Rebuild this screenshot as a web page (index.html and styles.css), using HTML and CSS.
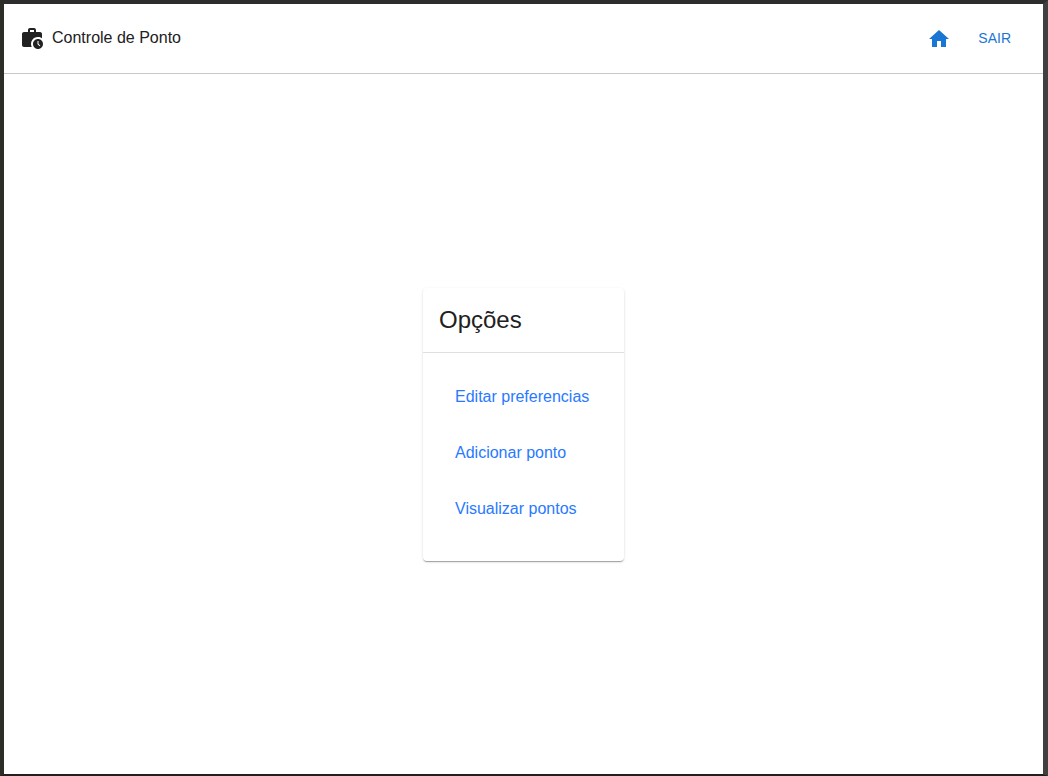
FILE: index.html
```html
<!DOCTYPE html>
<html lang="pt-BR">
<head>
<meta charset="utf-8">
<meta name="viewport" content="width=device-width, initial-scale=1">
<title>Controle de Ponto</title>
<link rel="stylesheet" href="styles.css">
</head>
<body class="page">
<header class="topbar">
  <div class="brand">
    <svg class="icon" viewBox="0 0 24 24" aria-hidden="true"><path d="M18 11c1.490 0 2.870.470 4 1.260V8c0-1.110-.890-2-2-2h-4V4c0-1.110-.890-2-2-2h-4c-1.110 0-2 .890-2 2v2H4c-1.110 0-1.990.890-1.990 2L2 19c0 1.110.890 2 2 2h7.680A6.995 6.995 0 0 1 18 11zm-8-7h4v2h-4V4z"/><path d="M18 13c-2.760 0-5 2.240-5 5s2.240 5 5 5 5-2.240 5-5-2.240-5-5-5zm1.650 7.350L17.500 18.200V15h1v2.790l1.850 1.850-.700.710z"/></svg>
    <span class="brand-name">Controle de Ponto</span>
  </div>
  <nav class="actions">
    <a class="home" href="#" aria-label="Início"><svg class="icon" viewBox="0 0 24 24" aria-hidden="true"><path d="M10 20v-6h4v6h5v-8h3L12 3 2 12h3v8z"/></svg></a>
    <button class="logout" type="button">SAIR</button>
  </nav>
</header>
<main class="content">
  <section class="card">
    <h1 class="card-title">Opções</h1>
    <ul class="options">
      <li><a class="option" href="#">Editar preferencias</a></li>
      <li><a class="option" href="#">Adicionar ponto</a></li>
      <li><a class="option" href="#">Visualizar pontos</a></li>
    </ul>
  </section>
</main>
</body>
</html>
```
FILE: styles.css
```css
* {
  box-sizing: border-box;
}

.page {
  display: flex;
  flex-direction: column;
  min-height: 100vh;
  margin: 0;
  border-style: solid;
  border-width: 4px 5px 2px 4px;
  border-color: #2d2d2d #404040 #231f20 #2d2d28;
  background: #fff;
  color: #212121;
  font: 16px/24px "Liberation Sans", Arial, sans-serif;
}

.topbar {
  display: flex;
  align-items: flex-start;
  justify-content: space-between;
  padding: 16px;
  border-bottom: 1px solid #c8c8c8;
}

.brand,
.actions {
  display: flex;
  align-items: flex-start;
}

.brand {
  gap: 8px;
  padding: 6px 0;
}

.actions {
  gap: 3px;
}

.icon {
  display: block;
  width: 24px;
  height: 24px;
  fill: currentColor;
}

.home {
  padding: 7px 8px 6px;
  color: #1976d2;
}

.logout {
  padding: 6px 16px;
  border: 0;
  background: none;
  color: #1976d2;
  font: 14px/24px "Liberation Sans", Arial, sans-serif;
  cursor: pointer;
}

.content {
  display: flex;
  flex: 1;
  align-items: center;
  justify-content: center;
}

.card {
  min-width: 201px;
  border-radius: 4px;
  background: #fff;
  box-shadow: 0 2px 1px -1px rgba(0, 0, 0, 0.2), 0 1px 1px rgba(0, 0, 0, 0.14), 0 1px 3px rgba(0, 0, 0, 0.12);
}

.card-title {
  margin: 0;
  padding: 16px;
  border-bottom: 1px solid #e0e0e0;
  font-size: 24px;
  font-weight: 400;
  line-height: 32px;
}

.options {
  margin: 0;
  padding: 16px 16px 24px;
  list-style: none;
}

.option {
  display: block;
  padding: 16px;
  color: #2979ff;
  text-decoration: none;
}
```
